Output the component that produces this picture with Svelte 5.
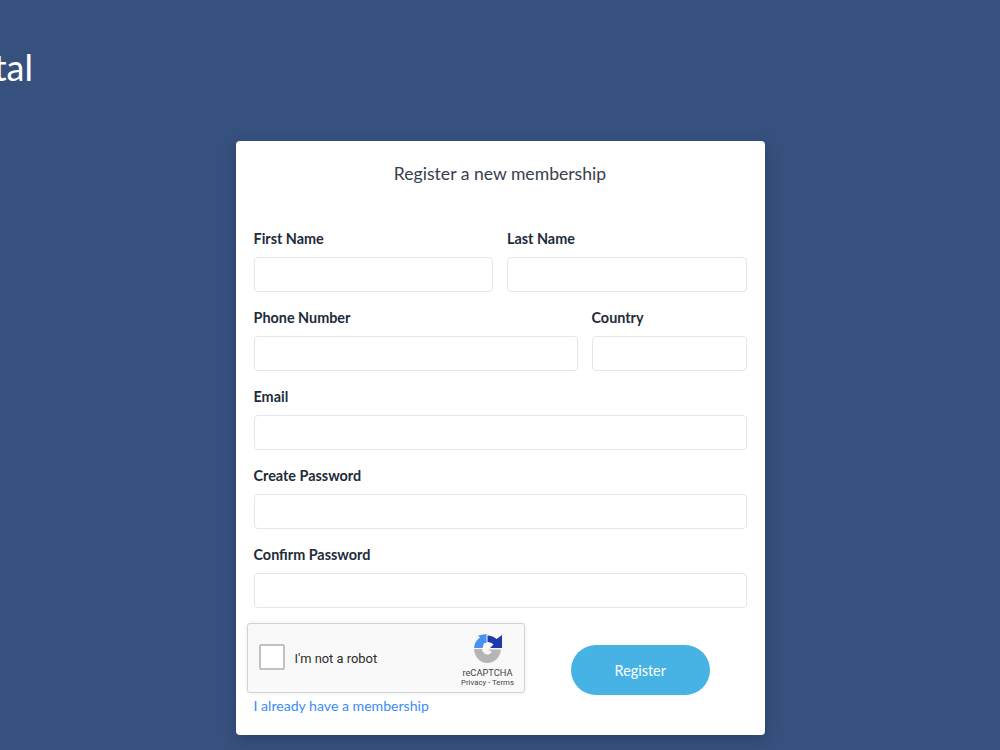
<script>
    const rows = [
        [{label: 'First Name', span: 6}, {label: 'Last Name', span: 6}],
        [{label: 'Phone Number', span: 8}, {label: 'Country', span: 4}],
        [{label: 'Email', span: 12}],
        [{label: 'Create Password', span: 12}],
        [{label: 'Confirm Password', span: 12}]
    ];
</script>

<style>
    :global(body) {
        background: #37517e;
        font-family: "Lato", "Open Sans", sans-serif;
        overflow: hidden;
    }

    .page {
        height: 750px;
        overflow: hidden;
    }

    .brand {
        display: flex;
        justify-content: flex-end;
        width: 33px;
        height: 141px;
        padding-top: 45px;
        box-sizing: border-box;
    }

    .brand h1 {
        margin: 0;
        font-size: 36px;
        line-height: 44px;
        font-weight: 400;
        color: #fff;
        white-space: nowrap;
    }

    .card {
        width: 529px;
        height: 594px;
        margin: 0 auto;
        padding: 0 18px;
        box-sizing: border-box;
        background: #fff;
        border-radius: 4px;
        box-shadow: 0 4px 14px rgba(20, 35, 70, 0.35);
    }

    .title {
        margin: 0;
        padding-top: 22px;
        height: 88px;
        box-sizing: border-box;
        font-size: 17.6px;
        line-height: 22px;
        font-weight: 400;
        text-align: center;
        color: #37404f;
    }

    .row {
        display: grid;
        grid-template-columns: repeat(12, 1fr);
        column-gap: 14px;
        height: 79px;
    }

    label {
        display: block;
        font-size: 14.4px;
        font-weight: 700;
        line-height: 20px;
        color: #212b3a;
    }

    input.text {
        display: block;
        width: 100%;
        height: 35px;
        margin-top: 8px;
        box-sizing: border-box;
        border: 1px solid #e3e6ea;
        border-radius: 4px;
        background: #fff;
    }

    .bottom {
        display: flex;
        align-items: flex-start;
        margin-top: -1px;
    }

    .left {
        width: 317.5px;
        flex: none;
    }

    .captcha {
        display: flex;
        align-items: center;
        width: 278px;
        height: 70px;
        margin-left: -7px;
        box-sizing: border-box;
        border: 1px solid #d3d3d3;
        border-radius: 3px;
        background: #f9f9f9;
        box-shadow: 0 0 4px rgba(0, 0, 0, 0.08);
        font-family: "Roboto", sans-serif;
    }

    .box {
        width: 26px;
        height: 26px;
        margin-left: 11px;
        margin-bottom: 2px;
        box-sizing: border-box;
        border: 2px solid #c1c1c1;
        border-radius: 2px;
        background: #fff;
    }

    .robot {
        margin-left: 10px;
        font-size: 12.9px;
        color: #2b2b2b;
    }

    .logo {
        display: flex;
        flex-direction: column;
        align-items: center;
        margin-left: auto;
        width: 62px;
        margin-right: 5px;
        padding-top: 6px;
    }

    .logo svg {
        display: block;
    }

    .logo .name {
        margin-top: 4px;
        font-size: 9.3px;
        line-height: 11px;
        color: #444;
    }

    .logo .terms {
        font-size: 7.8px;
        line-height: 10px;
        color: #444;
    }

    a {
        display: block;
        margin-top: 3px;
        font-size: 14.1px;
        line-height: 20px;
        color: #3b8cf7;
        text-decoration: none;
    }

    .register {
        width: 138.5px;
        height: 50px;
        margin-top: 22px;
        border: none;
        border-radius: 25px;
        background: #47b2e4;
        color: #fff;
        font-family: inherit;
        font-size: 14.4px;
    }
</style>

<div class="page">
    <div class="brand"><h1>Portal</h1></div>

    <div class="card">
        <h2 class="title">Register a new membership</h2>

        {#each rows as row}
            <div class="row">
                {#each row as field}
                    <div style="grid-column: span {field.span}">
                        <label>{field.label}<input class="text" type="text"></label>
                    </div>
                {/each}
            </div>
        {/each}

        <div class="bottom">
            <div class="left">
                <div class="captcha">
                    <div class="box"></div>
                    <span class="robot">I'm not a robot</span>
                    <div class="logo">
                        <svg width="28" height="29" viewBox="0 0 28 29">
                            <path d="M12.5 0 V9 L10 9 L8.5 14 H0 C0.5 9 2.5 6 6 3.5 L4 1.5 Z" fill="#4a90f0" />
                            <path d="M13.5 1.5 C17 1.5 20 3 22.5 5 L28 1 V14 H16 L19.5 10.5 C18 9 16 8 13.5 8 Z" fill="#1c3aa9" />
                            <path d="M0 15 H8 C8.5 19 12 21 15 20.5 L18 18 L14 15.5 H27 C26 24 20 29 13.5 29 C6 29 0.5 23 0 15 Z" fill="#b5b5b5" />
                        </svg>
                        <div class="name">reCAPTCHA</div>
                        <div class="terms">Privacy - Terms</div>
                    </div>
                </div>
                <a href="#top">I already have a membership</a>
            </div>
            <button class="register">Register</button>
        </div>
    </div>
</div>
